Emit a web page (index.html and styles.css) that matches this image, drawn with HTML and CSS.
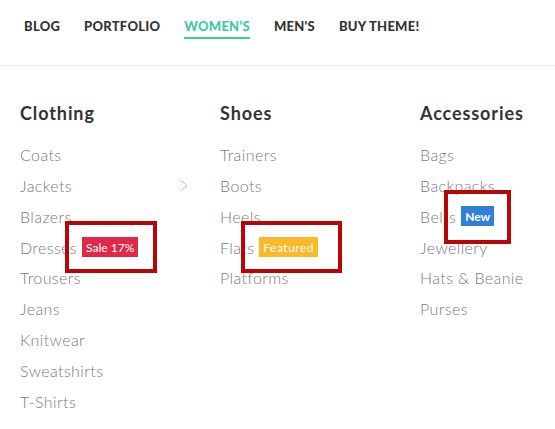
FILE: index.html
```html
<!DOCTYPE html>
<html>
<head>
<meta charset="utf-8">
<link rel="stylesheet" href="styles.css">
</head>
<body>
<div class="page">
  <header class="header">
    <nav class="nav">
      <a class="nav-item">BLOG</a>
      <a class="nav-item">PORTFOLIO</a>
      <a class="nav-item active">WOMEN'S</a>
      <a class="nav-item">MEN'S</a>
      <a class="nav-item">BUY THEME!</a>
    </nav>
  </header>
  <section class="mega">
    <div class="col">
      <h3 class="col-title">Clothing</h3>
      <ul class="list">
        <li>Coats</li>
        <li class="has-sub">Jackets <svg class="chev" width="6" height="11" viewBox="0 0 6 11"><path d="M0.5 0.5 L5.5 5.5 L0.5 10.5" fill="none" stroke="#bbb" stroke-width="1"/></svg></li>
        <li>Blazers</li>
        <li>Dresses <span class="badge sale">Sale 17%</span></li>
        <li>Trousers</li>
        <li>Jeans</li>
        <li>Knitwear</li>
        <li>Sweatshirts</li>
        <li>T-Shirts</li>
      </ul>
    </div>
    <div class="col">
      <h3 class="col-title">Shoes</h3>
      <ul class="list">
        <li>Trainers</li>
        <li>Boots</li>
        <li>Heels</li>
        <li>Flats <span class="badge featured">Featured</span></li>
        <li>Platforms</li>
      </ul>
    </div>
    <div class="col">
      <h3 class="col-title">Accessories</h3>
      <ul class="list">
        <li>Bags</li>
        <li>Backpacks</li>
        <li>Belts <span class="badge new">New</span></li>
        <li>Jewellery</li>
        <li>Hats &amp; Beanie</li>
        <li>Purses</li>
      </ul>
    </div>
  </section>
  <div class="mark mark-1"></div>
  <div class="mark mark-2"></div>
  <div class="mark mark-3"></div>
</div>
</body>
</html>
```
FILE: styles.css
```css
html, body { margin: 0; padding: 0; background: #fff; }
body { font-family: "Lato", "Liberation Sans", sans-serif; }
.page { position: relative; width: 555px; height: 429px; overflow: hidden; }
.header { height: 66px; border-bottom: 1px solid #ececec; box-sizing: border-box; }
.nav { display: flex; gap: 24px; padding: 18px 0 0 24px; }
.nav-item { font-weight: 900; font-size: 13px; letter-spacing: 0.25px; color: #333; line-height: 16px; padding-bottom: 3px; border-bottom: 2px solid transparent; }
.nav-item.active { color: #40c9a9; border-bottom-color: #40c9a9; }
.mega { display: flex; padding: 35px 0 0 20px; }
.col { flex: 0 0 168px; margin-right: 32px; }
.col-title { margin: 0 0 14px; font-size: 18px; font-weight: 700; line-height: 24px; color: #333; letter-spacing: 0.9px; }
.list { list-style: none; margin: 0; padding: 0; }
.list li { display: flex; align-items: center; height: 30.875px; font-size: 16px; font-weight: 300; color: #7a7a7a; letter-spacing: 0.4px; }
.has-sub { justify-content: space-between; }
.chev { margin-right: 1px; }
.badge { display: inline-flex; align-items: center; height: 20px; padding: 0 4px; margin-left: 5px; font-size: 12px; font-weight: 400; color: #fff; letter-spacing: 0; }
.badge.sale { background: #e0294a; }
.badge.featured { background: #fbb829; letter-spacing: 0.5px; }
.badge.new { background: #2f80d8; font-weight: 700; }
.mark { position: absolute; border: 4px solid #b80505; box-sizing: border-box; }
.mark-1 { left: 65px; top: 221px; width: 92px; height: 52px; }
.mark-2 { left: 241px; top: 221px; width: 101px; height: 52px; }
.mark-3 { left: 444px; top: 190px; width: 67px; height: 54px; }
```
